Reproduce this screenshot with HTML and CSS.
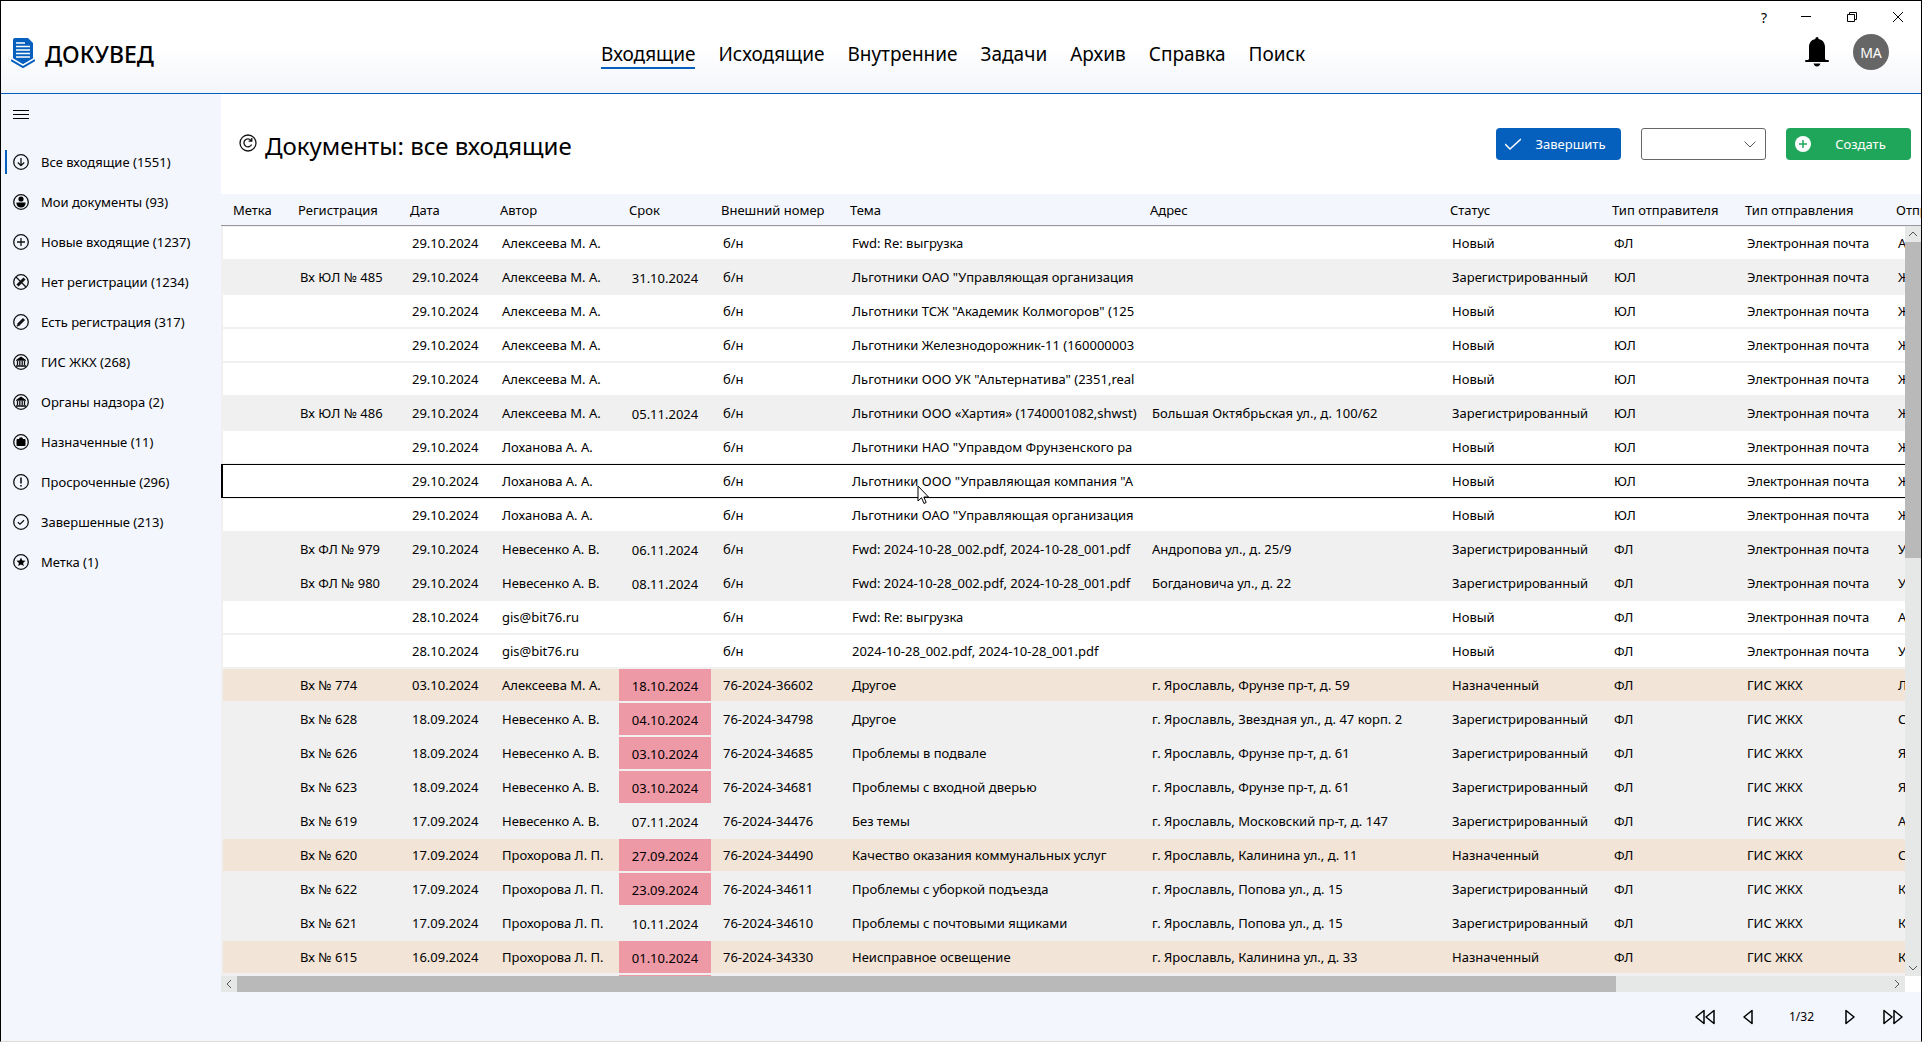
FILE: index.html
```html
<!DOCTYPE html>
<html lang="ru">
  <head>
    <meta charset="UTF-8" />
    <meta name="viewport" content="width=device-width, initial-scale=1.0" />
    <title>ДОКУВЕД</title>
    <link rel="stylesheet" href="styles.css">
  </head>
  <body>
    <header class="header">
      <a class="logo" href="#">
        <svg width="24" height="32" viewBox="0 0 24 32">
          <path d="M4 1h13l5 5v17l-10 5-10-5V3q0-2 2-2z" fill="#0560bd"/>
          <path d="M5 6h9M5 9.500h14M5 13h14M5 16.500h14M5 20h14" stroke="#fff" stroke-width="1.500"/>
          <path d="M0 22.500l12 7 12-7" fill="none" stroke="#fff" stroke-width="4"/>
          <path d="M0 23l12 7 12-7" fill="none" stroke="#0560bd" stroke-width="2"/>
        </svg>
        <span>ДОКУВЕД</span>
      </a>
      <nav class="menu">
        <a class="active" href="#">Входящие</a>
        <a href="#">Исходящие</a>
        <a href="#">Внутренние</a>
        <a href="#">Задачи</a>
        <a href="#">Архив</a>
        <a href="#">Справка</a>
        <a href="#">Поиск</a>
      </nav>
      <div class="header-right">
        <div class="window-buttons">
          <button type="button" class="help">?</button>
          <button type="button" aria-label="Свернуть"><svg width="10" height="10" viewBox="0 0 10 10"><path d="M0 4.500h10"/></svg></button>
          <button type="button" aria-label="Окно"><svg width="10" height="10" viewBox="0 0 10 10"><path d="M.5 2.500h7v7h-7zM2.500 2.500v-2h7v7h-2"/></svg></button>
          <button type="button" aria-label="Закрыть"><svg width="10" height="10" viewBox="0 0 10 10"><path d="M0 0l10 10M10 0L0 10"/></svg></button>
        </div>
        <div class="user">
          <button type="button" class="bell" aria-label="Уведомления">
            <svg width="24" height="30" viewBox="0 0 24 30">
              <path d="M12 0c1 0 1.600.8 1.600 2 4.200.8 6.400 4 6.400 8v12l1 1h2q1 0 1 1t-1 1H1q-1 0-1-1t1-1h2l1-1V10c0-4 2.200-7.200 6.400-8 0-1.200.6-2 1.600-2zM8.500 26.500h7q-1 3-3.500 3t-3.500-3z"/>
            </svg>
          </button>
          <button type="button" class="avatar">МА</button>
        </div>
      </div>
    </header>

    <div class="content">
      <aside class="sidebar">
        <button type="button" class="burger" aria-label="Меню">
          <svg width="16" height="10" viewBox="0 0 16 10"><path d="M0 .5h16M0 4.500h16M0 8.500h16" stroke="#000"/></svg>
        </button>
        <a class="side-link active" href="#">
          <svg viewBox="0 0 16 16"><circle cx="8" cy="8" r="7.300"/><path d="M8 4v7.500M4.800 8.500L8 11.700l3.200-3.200"/></svg>
          <span>Все входящие (1551)</span>
        </a>
        <a class="side-link" href="#">
          <svg viewBox="0 0 16 16"><circle cx="8" cy="8" r="7.300"/><circle class="fill" cx="8" cy="5" r="2.600"/><path class="fill" d="M3.500 8.500h9v1.500q-1 3.500-4.500 3.500t-4.500-3.500z"/></svg>
          <span>Мои документы (93)</span>
        </a>
        <a class="side-link" href="#">
          <svg viewBox="0 0 16 16"><circle cx="8" cy="8" r="7.300"/><path d="M8 4v8M4 8h8"/></svg>
          <span>Новые входящие (1237)</span>
        </a>
        <a class="side-link" href="#">
          <svg viewBox="0 0 16 16"><circle cx="8" cy="8" r="7.300"/><path class="bold" d="M4.500 11.500l7-7"/><path d="M3 3l10 10"/></svg>
          <span>Нет регистрации (1234)</span>
        </a>
        <a class="side-link" href="#">
          <svg viewBox="0 0 16 16"><circle cx="8" cy="8" r="7.300"/><path class="bold" d="M5 11l6-6"/><path d="M3.800 12.200l2-1"/></svg>
          <span>Есть регистрация (317)</span>
        </a>
        <a class="side-link" href="#">
          <svg viewBox="0 0 16 16"><circle cx="8" cy="8" r="7.300"/><path class="fill" d="M3 6l5-3.500L13 6v.8H3zM3 11.300h10v1.500H3z"/><path d="M4.500 7v4M6.800 7v4M9.200 7v4M11.500 7v4"/></svg>
          <span>ГИС ЖКХ (268)</span>
        </a>
        <a class="side-link" href="#">
          <svg viewBox="0 0 16 16"><circle cx="8" cy="8" r="7.300"/><path class="fill" d="M3 6l5-3.500L13 6v.8H3zM3 11.300h10v1.500H3z"/><path d="M4.500 7v4M6.800 7v4M9.200 7v4M11.500 7v4"/></svg>
          <span>Органы надзора (2)</span>
        </a>
        <a class="side-link" href="#">
          <svg viewBox="0 0 16 16"><circle cx="8" cy="8" r="7.300"/><path class="fill" d="M4.500 5H6q0-1.800 2-1.800T10 5h1.500q1 0 1 1v5q0 1-1 1h-7q-1 0-1-1V6q0-1 1-1z"/></svg>
          <span>Назначенные (11)</span>
        </a>
        <a class="side-link" href="#">
          <svg viewBox="0 0 16 16"><circle cx="8" cy="8" r="7.300"/><path d="M8 3.500v6M8 11v1.500" stroke-width="1.600"/></svg>
          <span>Просроченные (296)</span>
        </a>
        <a class="side-link" href="#">
          <svg viewBox="0 0 16 16"><circle cx="8" cy="8" r="7.300"/><path d="M4.800 8.200l2.200 2 4-4"/></svg>
          <span>Завершенные (213)</span>
        </a>
        <a class="side-link" href="#">
          <svg viewBox="0 0 16 16"><circle cx="8" cy="8" r="7.300"/><path class="fill" d="M8 3.500l1.300 3 3.200.3-2.400 2.100.7 3.200L8 10.400l-2.800 1.700.7-3.200-2.400-2.100 3.200-.3z"/></svg>
          <span>Метка (1)</span>
        </a>
      </aside>

      <main class="main">
        <div class="toolbar">
          <button type="button" class="refresh" aria-label="Обновить">
            <svg width="18" height="18" viewBox="0 0 18 18"><circle cx="9" cy="9" r="8"/><path d="M12.600 10.500A4 4 0 1 1 12 6.300M12.800 4v3.200H9.600"/></svg>
          </button>
          <h1>Документы: все входящие</h1>
          <button type="button" class="btn btn-finish">
            <svg width="16" height="16" viewBox="0 0 16 16"><path d="M0 8l5 5L16 3" fill="none" stroke="#fff" stroke-width="1.500"/></svg>
            <span>Завершить</span>
          </button>
          <div class="select-box">
            <select aria-label="Действие"><option></option></select>
            <svg width="12" height="7" viewBox="0 0 12 7"><path d="M.5.5L6 6l5.500-5.500"/></svg>
          </div>
          <button type="button" class="btn btn-create">
            <svg width="16" height="16" viewBox="0 0 16 16"><circle cx="8" cy="8" r="8" fill="#fff"/><path d="M8 4v8M4 8h8" stroke="#20a65a" stroke-width="1.500"/></svg>
            <span>Создать</span>
          </button>
        </div>

        <div class="table-box">
          <div class="table-view">
            <table class="docs">
              <colgroup>
                <col class="c-mark"><col class="c-reg"><col class="c-date"><col class="c-author"><col class="c-term"><col class="c-num"><col class="c-text"><col class="c-text"><col class="c-status"><col class="c-sender"><col class="c-kind"><col class="c-text">
              </colgroup>
              <thead>
                <tr><th>Метка</th><th>Регистрация</th><th>Дата</th><th>Автор</th><th>Срок</th><th>Внешний номер</th><th>Тема</th><th>Адрес</th><th>Статус</th><th>Тип отправителя</th><th>Тип отправления</th><th>Отправитель</th></tr>
              </thead>
              <tbody>
                <tr><td></td><td></td><td>29.10.2024</td><td>Алексеева М. А.</td><td></td><td>б/н</td><td>Fwd: Re: выгрузка</td><td></td><td>Новый</td><td>ФЛ</td><td>Электронная почта</td><td>А</td></tr>
                <tr class="reg"><td></td><td>Вх ЮЛ № 485</td><td>29.10.2024</td><td>Алексеева М. А.</td><td class="term">31.10.2024</td><td>б/н</td><td>Льготники ОАО "Управляющая организация</td><td></td><td>Зарегистрированный</td><td>ЮЛ</td><td>Электронная почта</td><td>Ж</td></tr>
                <tr><td></td><td></td><td>29.10.2024</td><td>Алексеева М. А.</td><td></td><td>б/н</td><td>Льготники ТСЖ "Академик Колмогоров" (125</td><td></td><td>Новый</td><td>ЮЛ</td><td>Электронная почта</td><td>Ж</td></tr>
                <tr><td></td><td></td><td>29.10.2024</td><td>Алексеева М. А.</td><td></td><td>б/н</td><td>Льготники Железнодорожник-11 (160000003</td><td></td><td>Новый</td><td>ЮЛ</td><td>Электронная почта</td><td>Ж</td></tr>
                <tr><td></td><td></td><td>29.10.2024</td><td>Алексеева М. А.</td><td></td><td>б/н</td><td>Льготники ООО УК "Альтернатива" (2351,real</td><td></td><td>Новый</td><td>ЮЛ</td><td>Электронная почта</td><td>Ж</td></tr>
                <tr class="reg"><td></td><td>Вх ЮЛ № 486</td><td>29.10.2024</td><td>Алексеева М. А.</td><td class="term">05.11.2024</td><td>б/н</td><td>Льготники ООО «Хартия» (1740001082,shwst)</td><td>Большая Октябрьская ул., д. 100/62</td><td>Зарегистрированный</td><td>ЮЛ</td><td>Электронная почта</td><td>Ж</td></tr>
                <tr><td></td><td></td><td>29.10.2024</td><td>Лоханова А. А.</td><td></td><td>б/н</td><td>Льготники НАО "Управдом Фрунзенского ра</td><td></td><td>Новый</td><td>ЮЛ</td><td>Электронная почта</td><td>Ж</td></tr>
                <tr class="selected"><td></td><td></td><td>29.10.2024</td><td>Лоханова А. А.</td><td></td><td>б/н</td><td>Льготники ООО "Управляющая компания "А</td><td></td><td>Новый</td><td>ЮЛ</td><td>Электронная почта</td><td>Ж</td></tr>
                <tr><td></td><td></td><td>29.10.2024</td><td>Лоханова А. А.</td><td></td><td>б/н</td><td>Льготники ОАО "Управляющая организация</td><td></td><td>Новый</td><td>ЮЛ</td><td>Электронная почта</td><td>Ж</td></tr>
                <tr class="reg"><td></td><td>Вх ФЛ № 979</td><td>29.10.2024</td><td>Невесенко А. В.</td><td class="term">06.11.2024</td><td>б/н</td><td>Fwd: 2024-10-28_002.pdf, 2024-10-28_001.pdf</td><td>Андропова ул., д. 25/9</td><td>Зарегистрированный</td><td>ФЛ</td><td>Электронная почта</td><td>У</td></tr>
                <tr class="reg"><td></td><td>Вх ФЛ № 980</td><td>29.10.2024</td><td>Невесенко А. В.</td><td class="term">08.11.2024</td><td>б/н</td><td>Fwd: 2024-10-28_002.pdf, 2024-10-28_001.pdf</td><td>Богдановича ул., д. 22</td><td>Зарегистрированный</td><td>ФЛ</td><td>Электронная почта</td><td>У</td></tr>
                <tr><td></td><td></td><td>28.10.2024</td><td>gis@bit76.ru</td><td></td><td>б/н</td><td>Fwd: Re: выгрузка</td><td></td><td>Новый</td><td>ФЛ</td><td>Электронная почта</td><td>А</td></tr>
                <tr><td></td><td></td><td>28.10.2024</td><td>gis@bit76.ru</td><td></td><td>б/н</td><td>2024-10-28_002.pdf, 2024-10-28_001.pdf</td><td></td><td>Новый</td><td>ФЛ</td><td>Электронная почта</td><td>У</td></tr>
                <tr class="assigned"><td></td><td>Вх № 774</td><td>03.10.2024</td><td>Алексеева М. А.</td><td class="term overdue">18.10.2024</td><td>76-2024-36602</td><td>Другое</td><td>г. Ярославль, Фрунзе пр-т, д. 59</td><td>Назначенный</td><td>ФЛ</td><td>ГИС ЖКХ</td><td>Л</td></tr>
                <tr class="reg"><td></td><td>Вх № 628</td><td>18.09.2024</td><td>Невесенко А. В.</td><td class="term overdue">04.10.2024</td><td>76-2024-34798</td><td>Другое</td><td>г. Ярославль, Звездная ул., д. 47 корп. 2</td><td>Зарегистрированный</td><td>ФЛ</td><td>ГИС ЖКХ</td><td>С</td></tr>
                <tr class="reg"><td></td><td>Вх № 626</td><td>18.09.2024</td><td>Невесенко А. В.</td><td class="term overdue">03.10.2024</td><td>76-2024-34685</td><td>Проблемы в подвале</td><td>г. Ярославль, Фрунзе пр-т, д. 61</td><td>Зарегистрированный</td><td>ФЛ</td><td>ГИС ЖКХ</td><td>Я</td></tr>
                <tr class="reg"><td></td><td>Вх № 623</td><td>18.09.2024</td><td>Невесенко А. В.</td><td class="term overdue">03.10.2024</td><td>76-2024-34681</td><td>Проблемы с входной дверью</td><td>г. Ярославль, Фрунзе пр-т, д. 61</td><td>Зарегистрированный</td><td>ФЛ</td><td>ГИС ЖКХ</td><td>Я</td></tr>
                <tr class="reg"><td></td><td>Вх № 619</td><td>17.09.2024</td><td>Невесенко А. В.</td><td class="term">07.11.2024</td><td>76-2024-34476</td><td>Без темы</td><td>г. Ярославль, Московский пр-т, д. 147</td><td>Зарегистрированный</td><td>ФЛ</td><td>ГИС ЖКХ</td><td>А</td></tr>
                <tr class="assigned"><td></td><td>Вх № 620</td><td>17.09.2024</td><td>Прохорова Л. П.</td><td class="term overdue">27.09.2024</td><td>76-2024-34490</td><td>Качество оказания коммунальных услуг</td><td>г. Ярославль, Калинина ул., д. 11</td><td>Назначенный</td><td>ФЛ</td><td>ГИС ЖКХ</td><td>С</td></tr>
                <tr class="reg"><td></td><td>Вх № 622</td><td>17.09.2024</td><td>Прохорова Л. П.</td><td class="term overdue">23.09.2024</td><td>76-2024-34611</td><td>Проблемы с уборкой подъезда</td><td>г. Ярославль, Попова ул., д. 15</td><td>Зарегистрированный</td><td>ФЛ</td><td>ГИС ЖКХ</td><td>К</td></tr>
                <tr class="reg"><td></td><td>Вх № 621</td><td>17.09.2024</td><td>Прохорова Л. П.</td><td class="term">10.11.2024</td><td>76-2024-34610</td><td>Проблемы с почтовыми ящиками</td><td>г. Ярославль, Попова ул., д. 15</td><td>Зарегистрированный</td><td>ФЛ</td><td>ГИС ЖКХ</td><td>К</td></tr>
                <tr class="assigned"><td></td><td>Вх № 615</td><td>16.09.2024</td><td>Прохорова Л. П.</td><td class="term overdue">01.10.2024</td><td>76-2024-34330</td><td>Неисправное освещение</td><td>г. Ярославль, Калинина ул., д. 33</td><td>Назначенный</td><td>ФЛ</td><td>ГИС ЖКХ</td><td>К</td></tr>
                <tr class="reg"><td></td><td></td><td></td><td></td><td class="term overdue"></td><td></td><td></td><td></td><td></td><td></td><td></td><td></td></tr>
              </tbody>
            </table>
          </div>
          <div class="vscroll">
            <button type="button" aria-label="Вверх"><svg width="10" height="6" viewBox="0 0 10 6"><path d="M1 5l4-4 4 4"/></svg></button>
            <div class="vtrack"><div class="vthumb"></div></div>
            <button type="button" aria-label="Вниз"><svg width="10" height="6" viewBox="0 0 10 6"><path d="M1 1l4 4 4-4"/></svg></button>
          </div>
          <svg class="cursor" width="14" height="20" viewBox="0 0 14 20"><path d="M1 1v15l3.500-3.300L7 18.500l2.200-1L6.800 12h4.700z" fill="#fff" stroke="#000"/></svg>
        </div>
        <div class="hscroll">
          <button type="button" aria-label="Влево"><svg width="6" height="10" viewBox="0 0 6 10"><path d="M5 1L1 5l4 4"/></svg></button>
          <div class="htrack"><div class="hthumb"></div></div>
          <button type="button" aria-label="Вправо"><svg width="6" height="10" viewBox="0 0 6 10"><path d="M1 1l4 4-4 4"/></svg></button>
        </div>

        <div class="pager">
          <button type="button" aria-label="Первая"><svg width="20" height="16" viewBox="0 0 20 16"><path d="M9 1.500v13L1 8zM19 1.500v13L11 8z"/></svg></button>
          <button type="button" aria-label="Назад"><svg width="10" height="16" viewBox="0 0 10 16"><path d="M9 1.500v13L1 8z"/></svg></button>
          <span>1/32</span>
          <button type="button" aria-label="Вперед"><svg width="10" height="16" viewBox="0 0 10 16"><path d="M1 1.500v13L9 8z"/></svg></button>
          <button type="button" aria-label="Последняя"><svg width="20" height="16" viewBox="0 0 20 16"><path d="M1 1.500v13L9 8zM11 1.500v13L19 8z"/></svg></button>
        </div>
      </main>
    </div>
  </body>
</html>
```
FILE: styles.css
```css
* {
  box-sizing: border-box;
}

body {
  margin: 0;
  height: 100vh;
  display: flex;
  flex-direction: column;
  overflow: hidden;
  border: 1px solid #000;
  border-bottom-color: #dcdccf;
  background: #f3f6fc;
  color: #000;
  font-family: "Noto Sans", "Open Sans", sans-serif;
  font-size: 13px;
}

button {
  padding: 0;
  border: none;
  background: none;
  font-family: inherit;
  color: inherit;
  cursor: pointer;
}

a {
  color: inherit;
  text-decoration: none;
}

/* Header */
.header {
  flex: none;
  height: 93px;
  display: grid;
  grid-template-columns: 1fr auto 1fr;
  border-bottom: 1px solid #0560bd;
  background: linear-gradient(#fff 50%, #f3f5fa);
}

.logo {
  display: flex;
  align-items: flex-start;
  gap: 10px;
  padding: 36px 0 0 10px;
  font-size: 23px;
  line-height: 34px;
  font-weight: 500;
}

.menu {
  display: flex;
  align-items: flex-start;
  gap: 23px;
  padding: 40px 16px 0 0;
  font-size: 19px;
  line-height: 26px;
}

.menu a {
  border-bottom: 2px solid transparent;
}

.menu a.active {
  border-color: #0560bd;
}

.header-right {
  display: flex;
  flex-direction: column;
  align-items: flex-end;
}

.window-buttons {
  display: flex;
  height: 32px;
}

.window-buttons button {
  display: flex;
  align-items: center;
  justify-content: center;
  width: 46px;
  font-size: 14px;
}

.window-buttons .help {
  width: 38px;
}

.window-buttons svg {
  fill: none;
  stroke: #000;
}

.user {
  display: flex;
  align-items: center;
  gap: 24px;
  padding: 1px 32px 0 0;
}

.bell svg {
  display: block;
}

.avatar {
  width: 36px;
  height: 36px;
  border-radius: 50%;
  background: #666;
  color: #fff;
  font-size: 14px;
}

/* Sidebar */
.content {
  flex: 1;
  min-height: 0;
  display: flex;
}

.sidebar {
  flex: none;
  width: 220px;
  padding: 16px 0 0 4px;
}

.burger {
  display: block;
  height: 10px;
  margin: 0 8px 30px;
}

.burger svg {
  display: block;
}

.side-link {
  display: flex;
  align-items: center;
  gap: 12px;
  height: 24px;
  margin-bottom: 16px;
  padding-left: 6px;
  border-left: 2px solid transparent;
}

.side-link.active {
  border-color: #0560bd;
}

.side-link svg {
  width: 16px;
  height: 16px;
  fill: none;
  stroke: #111;
  stroke-width: 1.3;
}

.side-link .fill {
  fill: #000;
  stroke: none;
}

.side-link .bold {
  stroke-width: 3;
}

/* Main part */
.main {
  flex: 1;
  min-width: 0;
  display: flex;
  flex-direction: column;
}

.toolbar {
  flex: none;
  height: 100px;
  display: flex;
  align-items: flex-start;
  gap: 20px;
  padding: 34px 10px 0 18px;
  background: #fff;
}

.refresh {
  margin: 6px -12px 0 0;
}

.refresh svg {
  display: block;
  fill: none;
  stroke: #111;
  stroke-width: 1.3;
}

h1 {
  flex: 1;
  margin: 0;
  font-size: 24px;
  line-height: 36px;
  font-weight: 400;
}

.btn {
  display: flex;
  align-items: center;
  width: 125px;
  height: 32px;
  padding: 0 9px;
  border-radius: 4px;
  color: #fff;
  font-size: 13px;
}

.btn span {
  flex: 1;
  padding-left: 8px;
}

.btn-finish {
  background: #0560bd;
}

.btn-create {
  background: #20a65a;
}

.select-box {
  position: relative;
  width: 125px;
  height: 32px;
}

.select-box select {
  width: 100%;
  height: 100%;
  appearance: none;
  border: 1px solid #666;
  border-radius: 3px;
  background: #fff;
}

.select-box svg {
  position: absolute;
  top: 13px;
  right: 10px;
  fill: none;
  stroke: #555;
  pointer-events: none;
}

/* Table */
.table-box {
  position: relative;
  flex: 1;
  min-height: 0;
}

.table-view {
  height: 100%;
  overflow: hidden;
}

.docs {
  width: 1965px;
  table-layout: fixed;
  border-collapse: separate;
  border-spacing: 0;
}

.c-mark { width: 67px; }
.c-reg { width: 112px; }
.c-date { width: 90px; }
.c-author { width: 129px; }
.c-term { width: 92px; }
.c-num { width: 129px; }
.c-text { width: 300px; }
.c-status { width: 162px; }
.c-sender { width: 133px; }
.c-kind { width: 151px; }

.docs th {
  height: 32px;
  padding: 0 0 0 10px;
  border-bottom: 1px solid #96969c;
  font-weight: 400;
  text-align: left;
  white-space: nowrap;
}

.docs th:first-child {
  padding-left: 12px;
}

.docs td {
  height: 34px;
  padding: 0 0 0 12px;
  border-top: 1px solid #f0f0f0;
  border-bottom: 1px solid #f0f0f0;
  background: #fff;
  white-space: nowrap;
  overflow: hidden;
}

.docs td:first-child {
  border-left: 2px solid #f0f0f0;
}

.docs .reg td {
  background: #f0f0f0;
}

.docs .assigned td {
  background: #f2e4d7;
}

.docs .selected td {
  border-color: #000;
}

.docs td.term {
  padding: 2px 0 0;
  text-align: center;
}

.docs tr td.overdue {
  background: #ee99a6;
}

.cursor {
  position: absolute;
  top: 291px;
  left: 696px;
}

/* Scrollbars */
.vscroll {
  position: absolute;
  top: 32px;
  right: 0;
  bottom: 0;
  width: 16px;
  display: flex;
  flex-direction: column;
  background: #e6e8e7;
}

.vtrack,
.htrack {
  flex: 1;
}

.vthumb {
  height: 44%;
  background: #b9b9b9;
}

.hscroll {
  flex: none;
  display: flex;
  height: 16px;
  margin-right: 16px;
  background: #e6e8e7;
  box-shadow: 16px 0 #fff;
}

.hthumb {
  width: 83.500%;
  height: 16px;
  background: #b9b9b9;
}

.vscroll button,
.hscroll button {
  display: flex;
  align-items: center;
  justify-content: center;
  width: 16px;
  height: 16px;
}

.vscroll svg,
.hscroll svg {
  fill: none;
  stroke: #555;
}

/* Pager */
.pager {
  flex: none;
  display: flex;
  align-items: center;
  justify-content: flex-end;
  gap: 28px;
  height: 49px;
  padding-right: 18px;
}

.pager span {
  padding: 0 3px 0 8px;
  font-size: 12px;
}

.pager svg {
  display: block;
  fill: none;
  stroke: #000;
  stroke-width: 1.5;
  stroke-linejoin: round;
}
```
